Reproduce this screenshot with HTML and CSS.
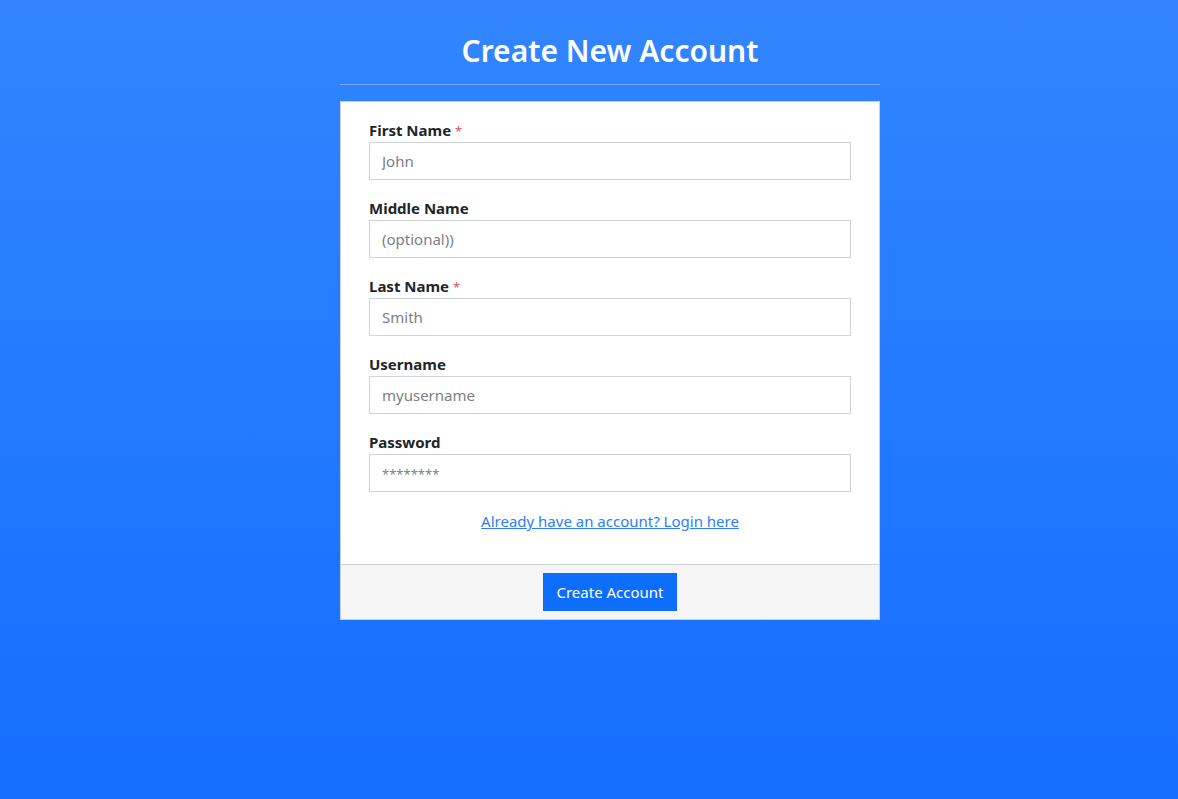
FILE: index.html
```html
<!DOCTYPE html>
<html lang="en">
<head>
<meta charset="utf-8">
<title>Create New Account</title>
<link rel="stylesheet" href="styles.css">
</head>
<body>
<main class="page">
  <header class="page-header">
    <h1 class="title">Create New Account</h1>
  </header>
  <form class="card">
    <div class="card-body">
      <div class="field">
        <label class="label" for="first">First Name <span class="req">*</span></label>
        <input class="input" id="first" type="text" placeholder="John">
      </div>
      <div class="field">
        <label class="label" for="middle">Middle Name</label>
        <input class="input" id="middle" type="text" placeholder="(optional))">
      </div>
      <div class="field">
        <label class="label" for="last">Last Name <span class="req">*</span></label>
        <input class="input" id="last" type="text" placeholder="Smith">
      </div>
      <div class="field">
        <label class="label" for="user">Username</label>
        <input class="input" id="user" type="text" placeholder="myusername">
      </div>
      <div class="field">
        <label class="label" for="pass">Password</label>
        <input class="input" id="pass" type="password" placeholder="********">
      </div>
      <p class="login"><a href="#">Already have an account? Login here</a></p>
    </div>
    <div class="card-footer">
      <button class="btn" type="button">Create Account</button>
    </div>
  </form>
</main>
</body>
</html>
```

FILE: styles.css
```css
html, body {
  height: 100%;
}
body {
  margin: 0;
  padding-left: 42px;
  min-height: 799px;
  background: linear-gradient(to bottom, #3385ff 0%, #146eff 100%);
  font-family: "Noto Sans", "Open Sans", sans-serif;
  color: #212529;
}
.page {
  width: 540px;
  margin: 0 auto;
  padding-top: 32px;
}
.page-header {
  border-bottom: 1px solid rgba(255, 255, 255, 0.35);
  padding-bottom: 14px;
  margin-bottom: 16px;
}
.title {
  margin: 0;
  text-align: center;
  color: #ffffff;
  font-size: 30px;
  font-weight: 600;
  line-height: 38px;
}
.card {
  background: #ffffff;
  border: 1px solid #cfcfcf;
}
.card-body {
  padding: 16px 28px 31px;
}
.field {
  margin-bottom: 16px;
}
.label {
  display: block;
  height: 24px;
  font-size: 15px;
  font-weight: 700;
  line-height: 24px;
  color: #212529;
}
.req {
  color: #e0525f;
  font-weight: 400;
  font-size: 13px;
  line-height: 1;
  vertical-align: top;
  position: relative;
  top: 7px;
}
.input {
  display: block;
  box-sizing: border-box;
  width: 100%;
  height: 38px;
  margin: 0;
  padding: 0 12px;
  border: 1px solid #ced4da;
  border-radius: 0;
  font-family: inherit;
  font-size: 15px;
  color: #212529;
  background: #fff;
}
.input::placeholder {
  color: #7a7f85;
}
.input[type="password"]::placeholder {
  font-size: 13px;
}
.login {
  margin: 17px 0 0;
  height: 24px;
  text-align: center;
  font-size: 15px;
  line-height: 24px;
}
.login a {
  color: #2f7bff;
  text-decoration: underline;
}
.card-footer {
  display: flex;
  justify-content: center;
  padding: 8px 0;
  background: #f5f5f5;
  border-top: 1px solid #cfcfcf;
}
.btn {
  height: 38px;
  padding: 0 13px;
  border: 0;
  border-radius: 0;
  background: #0d6efd;
  color: #ffffff;
  font-family: inherit;
  font-size: 15px;
  cursor: pointer;
}
```
